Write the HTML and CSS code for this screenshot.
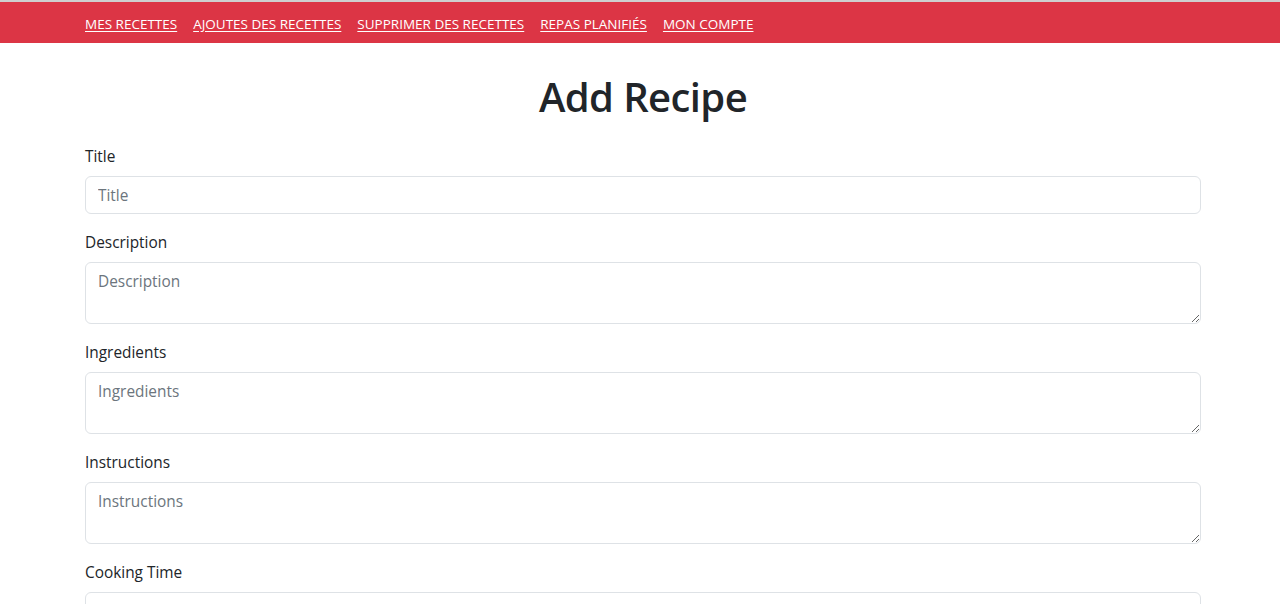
FILE: index.html
```html
<!DOCTYPE html>
<html lang="fr">
<head>
<meta charset="utf-8">
<title>Add Recipe</title>
<link rel="stylesheet" href="styles.css">
</head>
<body>
<div class="window-edge"></div>
<nav class="topbar">
  <ul class="nav-links">
    <li><a href="#">MES RECETTES</a></li>
    <li><a href="#">AJOUTES DES RECETTES</a></li>
    <li><a href="#">SUPPRIMER DES RECETTES</a></li>
    <li><a href="#">REPAS PLANIFIÉS</a></li>
    <li><a href="#">MON COMPTE</a></li>
  </ul>
</nav>
<main class="page">
  <h1 class="page-title">Add Recipe</h1>
  <form class="recipe-form">
    <div class="field">
      <label class="field-label" for="title">Title</label>
      <input class="field-control" id="title" type="text" placeholder="Title">
    </div>
    <div class="field">
      <label class="field-label" for="description">Description</label>
      <textarea class="field-control field-area" id="description" rows="2" placeholder="Description"></textarea>
    </div>
    <div class="field">
      <label class="field-label" for="ingredients">Ingredients</label>
      <textarea class="field-control field-area" id="ingredients" rows="2" placeholder="Ingredients"></textarea>
    </div>
    <div class="field">
      <label class="field-label" for="instructions">Instructions</label>
      <textarea class="field-control field-area" id="instructions" rows="2" placeholder="Instructions"></textarea>
    </div>
    <div class="field">
      <label class="field-label" for="time">Cooking Time</label>
      <input class="field-control" id="time" type="text" placeholder="Cooking Time">
    </div>
  </form>
</main>
</body>
</html>
```

FILE: styles.css
```css
html, body {
  margin: 0;
  padding: 0;
  background: #ffffff;
}

body {
  font-family: "Open Sans", "Noto Sans", "Liberation Sans", sans-serif;
  color: #212529;
  font-size: 15.4px;
  line-height: 24px;
}

.window-edge {
  height: 2px;
  background: #cfcfcf;
}

.topbar {
  box-sizing: border-box;
  background: #dc3545;
  height: 41px;
  padding-top: 2px;
  display: flex;
  align-items: center;
}

.nav-links {
  list-style: none;
  margin: 0 0 0 85px;
  padding: 0;
  display: flex;
  gap: 16px;
}

.nav-links a {
  color: #ffffff;
  font-size: 13.5px;
  text-decoration: underline;
  text-underline-offset: 2px;
}

.page {
  width: 1116px;
  margin: 0 0 0 85px;
}

.page-title {
  margin: 30px 0 23px;
  font-size: 40px;
  font-weight: 600;
  letter-spacing: -0.6px;
  line-height: 48px;
  text-align: center;
}

.recipe-form {
  display: flex;
  flex-direction: column;
  gap: 16px;
}

.field {
  display: flex;
  flex-direction: column;
}

.field-label {
  padding-top: 1px;
  margin-bottom: 7px;
}

.field-control {
  box-sizing: border-box;
  width: 100%;
  font-family: inherit;
  font-size: 15.4px;
  line-height: 24px;
  color: #212529;
  padding: 6px 12px;
  border: 1px solid #dee2e6;
  border-radius: 6px;
  background: #ffffff;
  margin: 0;
}

.field-control:not(.field-area) {
  height: 38px;
}

.field-control::placeholder {
  color: #6c757d;
  opacity: 1;
}

.field-area {
  height: 62px;
  padding-top: 7px;
  padding-bottom: 5px;
  resize: vertical;
  display: block;
}
```
